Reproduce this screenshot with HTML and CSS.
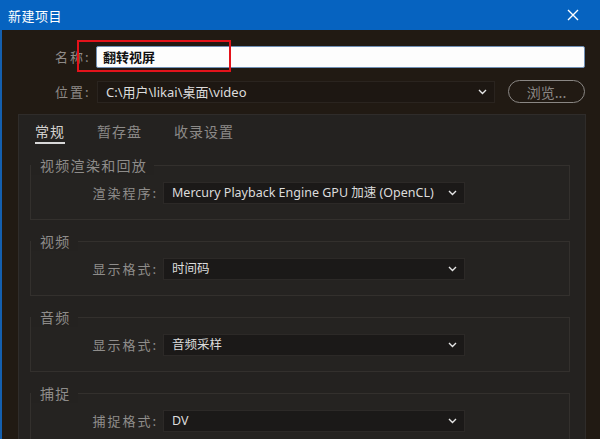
FILE: index.html
```html
<!DOCTYPE html>
<html lang="zh-CN">
<head>
<meta charset="utf-8">
<title>新建项目</title>
<link rel="stylesheet" href="styles.css">
</head>
<body>
<div class="window">
  <div class="titlebar">
    <span class="title">新建项目</span>
    <svg class="close" width="12" height="12" viewBox="0 0 12 12" aria-hidden="true">
      <path d="M1 1 L11 11 M11 1 L1 11" stroke="#fff" stroke-width="1.4" fill="none"/>
    </svg>
  </div>

  <div class="body">
    <div class="fields">
      <label class="field-label">名称:</label>
      <div class="text-input">翻转视屏</div>

      <label class="field-label">位置:</label>
      <div class="select select-path">
        <span class="select-value">C:\用户\likai\桌面\video</span>
        <svg class="chevron" width="9" height="6" viewBox="0 0 9 6"><path d="M1 1 L4.5 4.5 L8 1" stroke="#e6e6e6" stroke-width="1.4" fill="none"/></svg>
      </div>
      <button class="browse">浏览...</button>
    </div>

    <div class="panel">
      <div class="tabs">
        <span class="tab active">常规</span>
        <span class="tab">暂存盘</span>
        <span class="tab">收录设置</span>
      </div>

      <div class="groups">
        <section class="group">
          <div class="group-head"><span class="group-title">视频渲染和回放</span></div>
          <div class="row">
            <span class="row-label">渲染程序:</span>
            <div class="select">
              <span class="select-value">Mercury Playback Engine GPU 加速 (OpenCL)</span>
              <svg class="chevron" width="9" height="6" viewBox="0 0 9 6"><path d="M1 1 L4.5 4.5 L8 1" stroke="#e6e6e6" stroke-width="1.4" fill="none"/></svg>
            </div>
          </div>
        </section>

        <section class="group">
          <div class="group-head"><span class="group-title">视频</span></div>
          <div class="row">
            <span class="row-label">显示格式:</span>
            <div class="select">
              <span class="select-value">时间码</span>
              <svg class="chevron" width="9" height="6" viewBox="0 0 9 6"><path d="M1 1 L4.5 4.5 L8 1" stroke="#e6e6e6" stroke-width="1.4" fill="none"/></svg>
            </div>
          </div>
        </section>

        <section class="group">
          <div class="group-head"><span class="group-title">音频</span></div>
          <div class="row">
            <span class="row-label">显示格式:</span>
            <div class="select">
              <span class="select-value">音频采样</span>
              <svg class="chevron" width="9" height="6" viewBox="0 0 9 6"><path d="M1 1 L4.5 4.5 L8 1" stroke="#e6e6e6" stroke-width="1.4" fill="none"/></svg>
            </div>
          </div>
        </section>

        <section class="group">
          <div class="group-head"><span class="group-title">捕捉</span></div>
          <div class="row">
            <span class="row-label">捕捉格式:</span>
            <div class="select">
              <span class="select-value">DV</span>
              <svg class="chevron" width="9" height="6" viewBox="0 0 9 6"><path d="M1 1 L4.5 4.5 L8 1" stroke="#e6e6e6" stroke-width="1.4" fill="none"/></svg>
            </div>
          </div>
        </section>
      </div>
    </div>
  </div>

  <div class="highlight"></div>
</div>
</body>
</html>
```

FILE: styles.css
```css
* {
  box-sizing: border-box;
}

html, body {
  margin: 0;
  padding: 0;
  background: #211a13;
}

.window {
  position: relative;
  width: 600px;
  height: 439px;
  overflow: hidden;
  display: flex;
  flex-direction: column;
  background: #211a13;
  font-family: "Noto Sans", "Noto Sans CJK SC", sans-serif;
}

/* title bar */
.titlebar {
  height: 30px;
  flex: none;
  background: #0663c0;
  display: flex;
  align-items: center;
  justify-content: space-between;
  padding: 0 21px 0 8px;
  color: #fff;
}

.title {
  font-family: "Noto Sans CJK SC", sans-serif;
  font-size: 13px;
  letter-spacing: 0.5px;
  line-height: 1;
}

.close {
  display: block;
}

/* dialog body */
.body {
  flex: 1;
  display: flex;
  flex-direction: column;
  border-left: 2px solid #145fae;
  min-height: 0;
}

.fields {
  display: grid;
  grid-template-columns: 33px 1fr 77px;
  column-gap: 8px;
  row-gap: 12px;
  align-items: center;
  padding: 16px 15px 0 53px;
}

.field-label {
  font-family: "Noto Sans CJK SC", sans-serif;
  font-size: 13px;
  letter-spacing: 2px;
  color: #8f8b88;
  white-space: nowrap;
  line-height: 22px;
}

.text-input {
  grid-column: 2 / 4;
  height: 22px;
  background: #fdfdfd;
  border: 1px solid #6f8fb5;
  border-radius: 2px;
  padding: 0 6px;
  font-family: "Noto Sans CJK SC", sans-serif;
  font-weight: 700;
  font-size: 13px;
  line-height: 20px;
  color: #111;
}

.select {
  height: 22px;
  display: flex;
  align-items: center;
  justify-content: space-between;
  background: #1b1918;
  border: 1px solid #2c2927;
  padding: 0 7px 0 8px;
  color: #dcdcdc;
  font-size: 13px;
}

.select-path {
  margin: 0 5px 0 1px;
  background: #1d1712;
  border-color: #2a241f;
}

.select-value {
  white-space: nowrap;
  line-height: 20px;
}

.chevron {
  display: block;
  flex: none;
}

.browse {
  height: 23px;
  padding: 0;
  background: transparent;
  border: 1.5px solid #8a8784;
  border-radius: 12px;
  color: #8a8784;
  font-family: "Noto Sans CJK SC", sans-serif;
  font-size: 14px;
  line-height: 18px;
}

/* tabbed panel */
.panel {
  flex: 1;
  margin: 11px 14px 0 16px;
  background: #242220;
  border: 1px solid #2f2c2a;
  border-bottom: none;
}

.tabs {
  display: flex;
  padding: 6px 0 0 16px;
}

.tab {
  font-family: "Noto Sans CJK SC", sans-serif;
  font-size: 14px;
  letter-spacing: 1px;
  line-height: 21px;
  color: #8c8a88;
  margin-right: 32px;
  border-bottom: 2px solid transparent;
}

.tab.active {
  color: #d4d2d0;
  border-bottom-color: #d8d8d8;
}

.groups {
  padding: 0 15px 0 11px;
}

.group {
  margin-top: 21px;
  border: 1px solid #33302d;
  padding-bottom: 15px;
  background: #252321;
}

.group-head {
  height: 20px;
  margin-top: -12px;
}

.group-title {
  display: inline-block;
  padding: 0 7px 0 9px;
  background: #242220;
  font-family: "Noto Sans CJK SC", sans-serif;
  font-size: 14px;
  letter-spacing: 1.3px;
  line-height: 20px;
  color: #8e8c8a;
}

.row {
  display: flex;
  align-items: center;
  margin-top: 8px;
}

.row-label {
  width: 127px;
  margin-right: 5px;
  text-align: right;
  font-family: "Noto Sans CJK SC", sans-serif;
  font-size: 13px;
  letter-spacing: 2px;
  line-height: 18px;
  color: #8f8d8b;
  white-space: nowrap;
}

.row .select {
  width: 302px;
  font-size: 12.5px;
}

/* red annotation frame drawn over the name field */
.highlight {
  position: absolute;
  left: 77px;
  top: 40px;
  width: 154px;
  height: 32px;
  border: 2px solid #e3131b;
  pointer-events: none;
}
```
